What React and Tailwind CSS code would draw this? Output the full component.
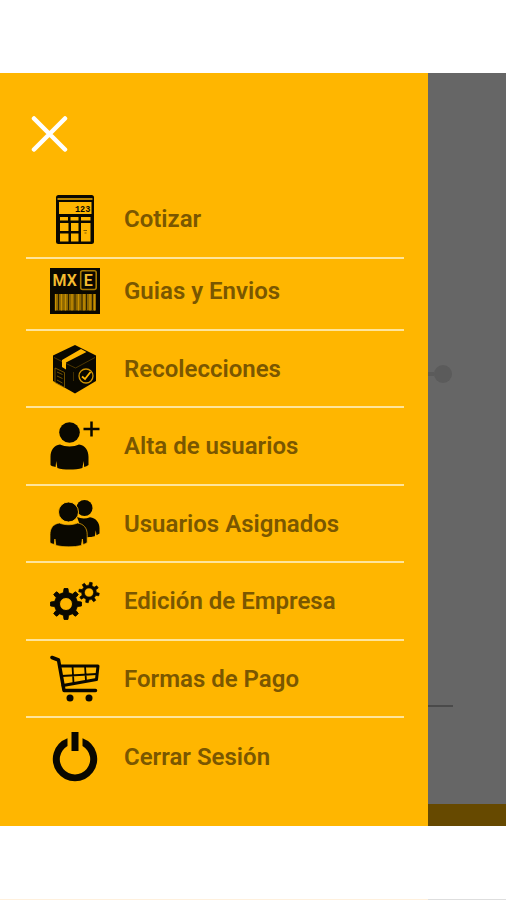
import React from "react";

function gearPath(cx, cy, outer, root, hole, teeth, turn) {
  const step = (Math.PI * 2) / teeth;
  const at = (r, a) => `${(cx + r * Math.sin(a)).toFixed(2)} ${(cy - r * Math.cos(a)).toFixed(2)}`;
  let d = "";
  for (let i = 0; i < teeth; i++) {
    const a = i * step + turn;
    d += `${i ? "L" : "M"}${at(root, a - step * 0.27)}L${at(outer, a - step * 0.16)}`;
    d += `L${at(outer, a + step * 0.16)}L${at(root, a + step * 0.27)}`;
    d += `A${root} ${root} 0 0 1 ${at(root, a + step * 0.73)}`;
  }
  d += `ZM${cx - hole} ${cy}a${hole} ${hole} 0 1 0 ${hole * 2} 0a${hole} ${hole} 0 1 0 ${-hole * 2} 0Z`;
  return d;
}

function Icon({ children }) {
  return (
    <svg viewBox="0 0 50 50" className="size-[50px] shrink-0" fill="#0a0800" aria-hidden="true">
      {children}
    </svg>
  );
}

const Calculator = () => (
  <Icon>
    <rect x="6" y="1" width="38" height="49" rx="2.5" />
    <rect x="7.5" y="4" width="35" height="2" fill="#b98500" />
    <rect x="9" y="8" width="32.5" height="12" fill="#ffb600" />
    <text x="25" y="17.5" fontSize="8.5" fontWeight="700" className="font-['Liberation_Mono',monospace]">123</text>
    <g fill="#ffb600">
      <rect x="10" y="23" width="8" height="3.5" />
      <rect x="20.5" y="23" width="8" height="3.5" />
      <rect x="31" y="23" width="9.5" height="3.5" />
      <rect x="10" y="29" width="8.5" height="8" />
      <rect x="21" y="29" width="7.5" height="8" />
      <rect x="10" y="39.5" width="8.5" height="8" />
      <rect x="21" y="39.5" width="7.5" height="8" />
      <rect x="31" y="29" width="9.5" height="18.5" />
    </g>
    <path d="M33.5 36.5h3.5M34.5 39h2" stroke="#805b00" fill="none" />
  </Icon>
);

const Label = () => (
  <Icon>
    <rect y="2" width="50" height="46" />
    <text x="2.5" y="19.5" fontSize="16" fontWeight="600" fill="#f5bd30" className="font-['Roboto',sans-serif]">MX</text>
    <rect x="30.7" y="4.7" width="15.5" height="18.8" rx="2" fill="none" stroke="#a87a00" strokeWidth="1.6" />
    <text x="33.8" y="19.5" fontSize="16" fontWeight="600" fill="#f5bd30" className="font-['Roboto',sans-serif]">E</text>
    <rect x="5" y="28" width="41" height="16.5" fill="#8f6800" />
    <path d="M5.5 28v16.5M11.5 28v16.5M15.5 28v16.5M22 28v16.5M28.5 28v16.5M34 28v16.5M40 28v16.5M44.5 28v16.5" stroke="#c99000" strokeWidth="1.3" />
    <path d="M8.5 28v16.5M18.5 28v16.5M25 28v16.5M32 28v16.5M36.5 28v16.5M42.5 28v16.5" stroke="#302300" strokeWidth="1" />
  </Icon>
);

const Parcel = () => (
  <Icon>
    <path d="M25 1 46 11.5V37L25 49.5 3 37V11.5Z" />
    <path d="m31 5 5.5 3L16 18.5v7l-4-2.5v-7Z" fill="#ffb600" />
    <path d="m4 13.5 8 4M16 19.5l9.5 4.5L45 13.5" fill="none" stroke="#7a5700" strokeWidth="0.6" />
    <path d="m5 24 9.5 4.5v15L5 38.5ZM7 28l5.5 2.5M7 32l5.5 2.5M7 36l5.5 3" fill="none" stroke="#8a6300" strokeWidth="0.8" />
    <path d="M23.5 28v9" stroke="#4d3700" strokeWidth="0.8" />
    <circle cx="36" cy="32" r="7" fill="none" stroke="#d09400" strokeWidth="1.3" />
    <path d="m32 32.5 3 2.5 5.5-7" fill="none" stroke="#ffb600" strokeWidth="1.8" />
  </Icon>
);

const AddUser = () => (
  <Icon>
    <circle cx="19.5" cy="11.5" r="10.3" />
    <path d="M10 23.5c5 2.5 14 2.5 19 0 6 .8 9.5 5.5 9.5 12.5v8c-1.3 1-2.7 1.6-4.3 2l-.6-6-1.2 7c-7 2-19 2-25 0l-1.2-7-.6 6C3 45.5 1.5 45 .5 44v-8C.5 29 4 24.3 10 23.5Z" />
    <path d="M41.5 .5v15M33.5 8h16" stroke="#0a0800" strokeWidth="2.5" fill="none" />
  </Icon>
);

const Users = () => (
  <Icon>
    <circle cx="34.5" cy="9" r="8" />
    <path d="M27 18c4 1.8 9 1.8 13 .2 6 1 9.5 5 9.5 11v5.3l-3 1.8-.7-5-1 6c-3 .8-7 1-10.5 .7Z" />
    <circle cx="18.5" cy="13" r="10" stroke="#ffb600" strokeWidth="0.9" />
    <path d="M9.5 24c5 2.3 13 2.3 18 0 6 .8 9.7 5 9.7 11.5v8c-1.2 1-2.5 1.6-4.2 2l-.6-5.5-1 6.5c-7 1.8-18 1.8-25.5 0l-1-6.5-.6 5.5C2.3 45 1 44.5 0 43.5v-8C0 29 3.5 24.8 9.5 24Z" stroke="#ffb600" strokeWidth="0.7" />
  </Icon>
);

const Gears = () => (
  <Icon>
    <path fillRule="evenodd" stroke="#0a0800" strokeWidth="1" strokeLinejoin="round" d={gearPath(16, 28, 15.5, 11.5, 6.5, 8, 0)} />
    <path fillRule="evenodd" stroke="#0a0800" strokeWidth="0.7" strokeLinejoin="round" d={gearPath(39, 16.5, 10.3, 7.3, 4.6, 8, 0.2)} />
  </Icon>
);

const Cart = () => (
  <Icon>
    <g fill="none" stroke="#0a0800" strokeLinecap="round" strokeLinejoin="round">
      <path d="m2 3.5 6.5 2.5L14 36.500h31.500" strokeWidth="3.5" />
      <path d="M10.500 12H48l-1.500 13.500L13 31.500" strokeWidth="3" />
      <path d="M11.500 22 47 20M22.500 12l1 17M35 12l1 15" strokeWidth="1.8" />
    </g>
    <circle cx="20" cy="44" r="3.5" />
    <circle cx="39" cy="44" r="3.5" />
  </Icon>
);

const Power = () => (
  <Icon>
    <path
      fillRule="evenodd"
      d="M17.500 6.200V14A15.200 15.200 0 1 0 32.500 14V6.200A22.200 22.200 0 1 1 17.500 6.200Z"
    />
    <rect x="21.500" y="0" width="7" height="19" />
  </Icon>
);

const items = [
  { label: "Cotizar", icon: Calculator, row: "h-[78px] border-b-2" },
  { label: "Guias y Envios", icon: Label, row: "h-[72px] border-b-2 pb-1.5" },
  { label: "Recolecciones", icon: Parcel, row: "h-[77px] border-b-2" },
  { label: "Alta de usuarios", icon: AddUser, row: "h-[78px] border-b-2" },
  { label: "Usuarios Asignados", icon: Users, row: "h-[77px] border-b-2" },
  { label: "Edición de Empresa", icon: Gears, row: "h-[78px] border-b-2" },
  { label: "Formas de Pago", icon: Cart, row: "h-[77px] border-b-2" },
  { label: "Cerrar Sesión", icon: Power, row: "h-[77px]" },
];

export default function App() {
  return (
    <div className="flex min-h-screen flex-col bg-white pt-[73px] font-['Roboto',sans-serif]">
      <main className="flex">
        <aside className="min-w-0 flex-1 bg-[#ffb600] pb-[31px]">
          <header className="flex h-[108px] items-start pt-[42px] pl-[30px]">
            <button type="button" aria-label="Cerrar menú">
              <svg viewBox="0 0 38 38" className="size-[38px]" fill="none" stroke="white" strokeWidth="4.5" strokeLinecap="round">
                <path d="m4 3.500 31 31M35 3.500l-31 31" />
              </svg>
            </button>
          </header>
          <nav className="mr-6 ml-[26px]">
            <ul>
              {items.map(({ label, icon: Glyph, row }) => (
                <li key={label} className={`flex border-[#ffe59b] ${row}`}>
                  <a href="#" className="flex flex-1 items-center gap-6 pl-6 text-2xl font-semibold whitespace-nowrap text-[#7a5700]">
                    <Glyph />
                    {label}
                  </a>
                </li>
              ))}
            </ul>
          </nav>
        </aside>
        <div className="flex w-[78px] flex-col bg-[#666666] pt-[292px]">
          <div className="flex items-center">
            <div className="h-1 w-[6px] bg-[#5b5b5b]" />
            <div className="size-[18px] rounded-full bg-[#5b5b5b]" />
          </div>
          <div className="mt-[322px] h-0.5 w-[25px] bg-[#4a4a4a]" />
          <div className="mt-auto h-[22px] bg-[#664900]" />
        </div>
      </main>
      <div className="mt-auto flex h-px">
        <div className="flex-1 bg-[#fff0dc]" />
        <div className="w-[78px] bg-[#dedede]" />
      </div>
    </div>
  );
}
